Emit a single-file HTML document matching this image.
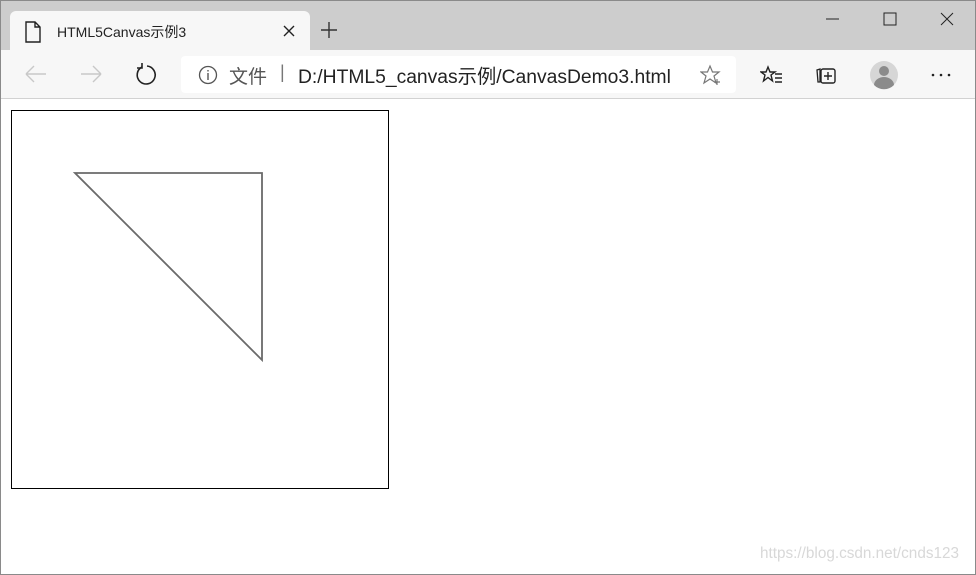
<!DOCTYPE html>
<html><head><meta charset="utf-8"><style>
*{margin:0;padding:0;box-sizing:border-box}
body{width:976px;height:575px;overflow:hidden;background:#fff;font-family:"Segoe UI","Liberation Sans","Noto Sans CJK SC",sans-serif;position:relative}
.frame{position:absolute;left:0;top:0;width:976px;height:575px;border:1px solid #8a8a8a;pointer-events:none}
.title{position:absolute;left:0;top:0;width:976px;height:50px;background:#cdcdcd}
.tab{position:absolute;left:10px;top:11px;width:300px;height:40px;background:#f7f7f7;border-radius:6px 6px 0 0}
.toolbar{position:absolute;left:0;top:50px;width:976px;height:49px;background:#f7f7f7;border-bottom:1px solid #d2d2d2}
.addr{position:absolute;left:181px;top:6px;width:555px;height:37px;background:#fff;border-radius:4px}
.t{position:absolute;white-space:nowrap}
svg{position:absolute}
</style></head><body>
<div class="title"></div>
<div class="tab">
<svg style="left:14px;top:10px" width="18" height="22" viewBox="0 0 18 22"><path d="M2 1h9l5 5v15H2z M11 1v5h5" fill="none" stroke="#222" stroke-width="1.4"/></svg>
<div class="t" style="left:47px;top:11px;font-size:14px;color:#222">HTML5Canvas示例3</div>
<svg style="left:273px;top:14px" width="12" height="12"><path d="M1 1L11 11M11 1L1 11" stroke="#222" stroke-width="1.4"/></svg>
</div>
<svg style="left:320px;top:21px" width="18" height="18"><path d="M9 1V17M1 9H17" stroke="#333" stroke-width="1.4"/></svg>
<svg style="left:826px;top:18px" width="14" height="2"><path d="M0 1H13" stroke="#222"/></svg>
<svg style="left:883px;top:12px" width="14" height="14"><rect x="1" y="1" width="12" height="12" fill="none" stroke="#222"/></svg>
<svg style="left:940px;top:12px" width="14" height="14"><path d="M1 1L13 13M13 1L1 13" stroke="#222"/></svg>
<div class="toolbar">
<svg style="left:24px;top:14px" width="24" height="20"><path d="M2 10H22M2 10L10 2M2 10L10 18" fill="none" stroke="#c8c8c8" stroke-width="1.4"/></svg>
<svg style="left:79px;top:14px" width="24" height="20"><path d="M2 10H22M22 10L14 2M22 10L14 18" fill="none" stroke="#c8c8c8" stroke-width="1.4"/></svg>
<svg style="left:134px;top:13px" width="24" height="24"><path d="M8 4A9 9 0 1 0 13 3" fill="none" stroke="#222" stroke-width="1.6"/><path d="M8 0V5H3" fill="none" stroke="#222" stroke-width="1.6"/></svg>
<div class="addr">
<svg style="left:17px;top:9px" width="20" height="20"><circle cx="10" cy="10" r="8.5" fill="none" stroke="#555" stroke-width="1.3"/><path d="M10 8V15M10 5V6.5" stroke="#555" stroke-width="1.4"/></svg>
<div class="t" style="left:48px;top:6px;font-size:19px;color:#555">文件</div>
<div class="t" style="left:99px;top:6px;font-size:18px;color:#777">|</div>
<div class="t" style="left:117px;top:5px;font-size:19.3px;color:#222">D:/HTML5_canvas示例/CanvasDemo3.html</div>
<svg style="left:519px;top:8px" width="22" height="22"><path d="M10 2L12.5 8H19L14 12L16 19L10 15L4 19L6 12L1 8H7.5Z" fill="none" stroke="#777" stroke-width="1.2"/><path d="M17 15V21M14 18H20" stroke="#777" stroke-width="1.2"/></svg>
</div>
<svg style="left:760px;top:15px" width="24" height="22"><path d="M8 2L10 7H15L11 10L12.5 16L8 12.5L3.5 16L5 10L1 7H6Z" fill="none" stroke="#222" stroke-width="1.4"/><path d="M15 9H22M15 13H22M15 17H22" stroke="#222" stroke-width="1.4"/></svg>
<svg style="left:816px;top:14px" width="22" height="22"><path d="M4 5V18H2L1 6Z" fill="none" stroke="#222" stroke-width="1.3"/><rect x="5" y="5" width="14" height="14" rx="2" fill="none" stroke="#222" stroke-width="1.4"/><path d="M12 8V16M8 12H16" stroke="#222" stroke-width="1.4"/></svg>
<svg style="left:869px;top:10px" width="30" height="30"><circle cx="15" cy="15" r="14" fill="#d6d6d6"/><circle cx="15" cy="11" r="5" fill="#8b8b8b"/><path d="M5 25A10 8 0 0 1 25 25A14 14 0 0 1 5 25Z" fill="#8b8b8b"/></svg>
<svg style="left:930px;top:23px" width="22" height="4"><circle cx="3" cy="2" r="1.3" fill="#222"/><circle cx="11" cy="2" r="1.3" fill="#222"/><circle cx="19" cy="2" r="1.3" fill="#222"/></svg>
</div>
<svg style="left:0;top:100px" width="400" height="400"><rect x="11.5" y="10.5" width="377" height="378" fill="none" stroke="#000"/><path d="M75 73H262V260Z" fill="none" stroke="#6a6a6a" stroke-width="1.8"/></svg>
<div class="t" style="left:760px;top:545px;font-size:15.3px;color:#d8d8d8;font-family:'Liberation Sans',sans-serif">https://blog.csdn.net/cnds123</div>
<div class="frame"></div>
</body></html>
